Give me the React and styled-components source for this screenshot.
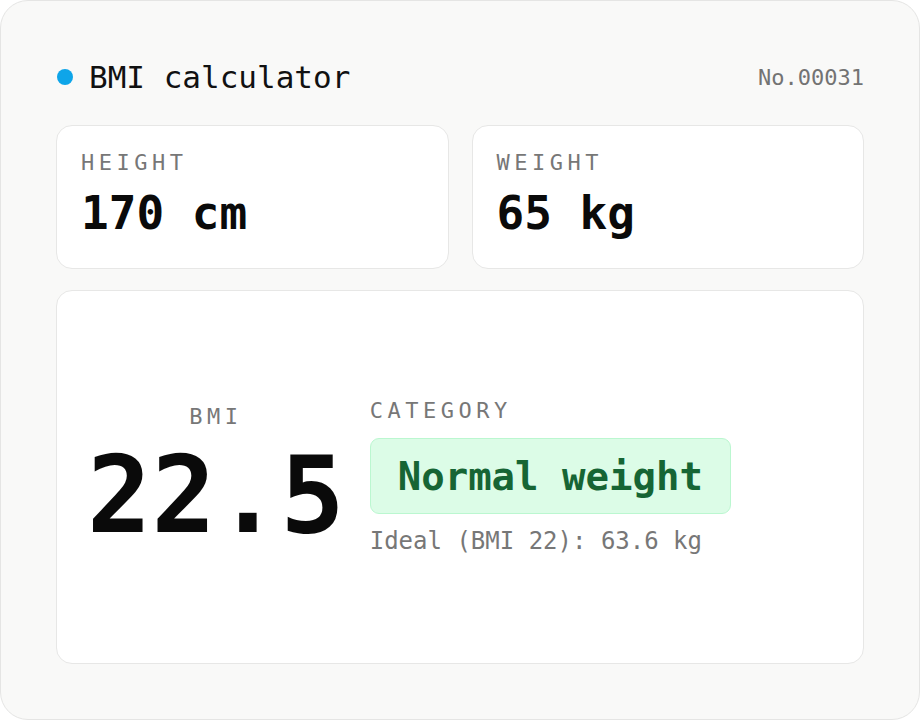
import React from "react";
import styled, { createGlobalStyle } from "styled-components";

const Global = createGlobalStyle`
  html, body { margin: 0; padding: 0; background: #ffffff; }
  body { font-family: "DejaVu Sans Mono", "Liberation Mono", monospace; }
  * { box-sizing: border-box; }
`;

const Shell = styled.div`
  width: 920px;
  height: 720px;
  background: #f9f9f8;
  border: 1px solid #e5e5e4;
  border-radius: 28px;
  padding: 47px 55px 55px;
  display: flex;
  flex-direction: column;
`;

const Header = styled.header`
  height: 58px;
  display: flex;
  align-items: center;
  justify-content: space-between;
  margin-bottom: 19px;
`;

const TitleWrap = styled.div`
  display: flex;
  align-items: center;
  gap: 16px;
`;

const Dot = styled.span`
  width: 16px;
  height: 16px;
  border-radius: 50%;
  background: #0ea5e9;
  display: block;
  margin-left: 1px;
`;

const Title = styled.h1`
  margin: 0;
  font-size: 31px;
  font-weight: 400;
  color: #111111;
`;

const Serial = styled.span`
  font-size: 22px;
  color: #737373;
`;

const Row = styled.div`
  display: grid;
  grid-template-columns: 1fr 1fr;
  gap: 23px;
  margin-bottom: 21px;
`;

const Card = styled.section`
  background: #ffffff;
  border: 1px solid #e7e7e6;
  border-radius: 16px;
  padding: 24px 24px 26px;
`;

const Label = styled.div`
  font-size: 22px;
  letter-spacing: 4.5px;
  color: #777777;
  line-height: 1.2;
`;

const Value = styled.div`
  font-size: 46px;
  font-weight: 700;
  color: #0a0a0a;
  line-height: 1.2;
  margin-top: 10px;
`;

const ResultCard = styled(Card)`
  flex: 1;
  display: flex;
  align-items: center;
  gap: 25px;
  padding: 24px 24px 24px 30px;
`;

const BmiCol = styled.div`
  display: flex;
  flex-direction: column;
  align-items: center;
`;

const BmiValue = styled.div`
  font-size: 107px;
  font-weight: 700;
  color: #0a0a0a;
  line-height: 1;
  margin-top: 12px;
`;

const CatCol = styled.div`
  display: flex;
  flex-direction: column;
  align-items: flex-start;
`;

const Badge = styled.div`
  margin-top: 14px;
  background: #dcfce7;
  border: 1px solid #bbf7d0;
  border-radius: 9px;
  padding: 0 27px;
  height: 76px;
  display: flex;
  align-items: center;
  font-size: 39px;
  font-weight: 700;
  color: #166534;
`;

const Note = styled.div`
  margin-top: 13px;
  font-size: 24px;
  color: #777777;
`;

export default function App() {
  return (
    <>
      <Global />
      <Shell>
        <Header>
          <TitleWrap>
            <Dot />
            <Title>BMI calculator</Title>
          </TitleWrap>
          <Serial>No.00031</Serial>
        </Header>
        <Row>
          <Card>
            <Label>HEIGHT</Label>
            <Value>170 cm</Value>
          </Card>
          <Card>
            <Label>WEIGHT</Label>
            <Value>65 kg</Value>
          </Card>
        </Row>
        <ResultCard>
          <BmiCol>
            <Label>BMI</Label>
            <BmiValue>22.5</BmiValue>
          </BmiCol>
          <CatCol>
            <Label>CATEGORY</Label>
            <Badge>Normal weight</Badge>
            <Note>Ideal (BMI 22): 63.6 kg</Note>
          </CatCol>
        </ResultCard>
      </Shell>
    </>
  );
}
